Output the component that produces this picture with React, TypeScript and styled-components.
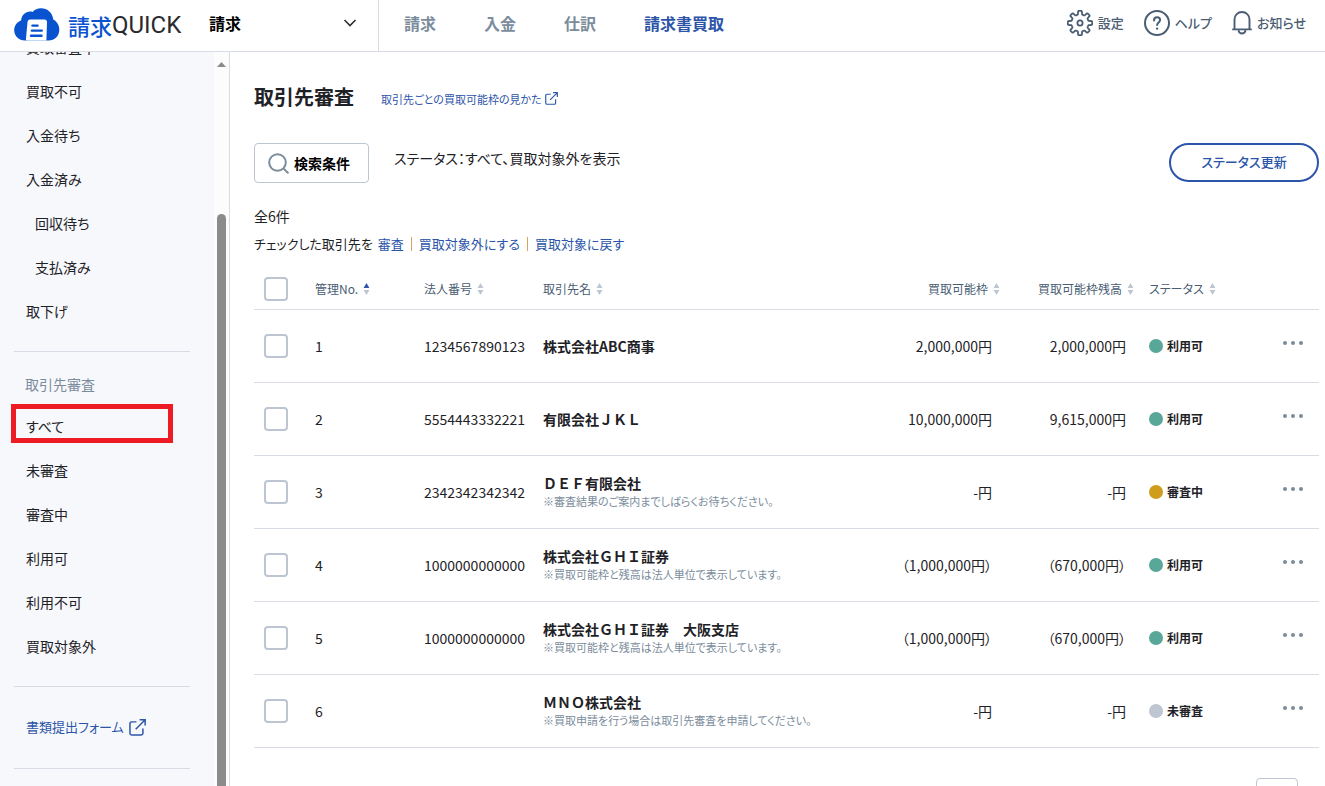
import React from "react";
import styled, { createGlobalStyle } from "styled-components";

const color = {
  text: "#1e2226",
  blue: "#2c55a9",
  slate: "#4a5d73",
  muted: "#7b8c9c",
  line: "#d8dce5",
  border: "#bcc5d1",
};

const GlobalStyle = createGlobalStyle`
  *, *::before, *::after { box-sizing: border-box; }
  body {
    margin: 0;
    background: #fff;
    color: ${color.text};
    font: 400 14px/20px "Noto Sans CJK JP", sans-serif;
    font-feature-settings: "palt";
  }
  button, input, select { font: inherit; font-feature-settings: inherit; color: inherit; margin: 0; }
  button { cursor: pointer; }
  a { color: ${color.blue}; text-decoration: none; }
  svg { display: block; flex: none; }
  ul { list-style: none; margin: 0; padding: 0; }
`;

const Page = styled.div`
  display: flex;
  flex-direction: column;
  height: 100vh;
  overflow: hidden;
`;

const Header = styled.header`
  display: flex;
  flex: none;
  height: 52px;
  border-bottom: 1px solid ${color.line};
`;

const Brand = styled.div`
  display: flex;
  align-items: center;
  width: 379px;
  padding: 0 21px 5px 14px;
  border-right: 1px solid ${color.line};
`;

const Logo = styled.a`
  display: flex;
  align-items: center;
  width: 195px;
  padding-top: 3px;
  line-height: 32px;
`;

const LogoKanji = styled.span`
  margin-left: 8px;
  font-size: 22px;
  font-weight: 500;
  color: #0a53d0;
`;

const LogoLatin = styled.span`
  font-family: "Liberation Sans Narrow", Roboto, sans-serif;
  font-size: 24px;
  color: #2a2a2e;
`;

const ProductSwitch = styled.button`
  display: flex;
  flex: 1;
  align-items: center;
  justify-content: space-between;
  padding: 0;
  border: 0;
  background: none;
  font-size: 16px;
  font-weight: 700;
  color: #000;
`;

const MainNav = styled.nav`
  display: flex;
  flex: 1;
  align-items: center;
  gap: 48px;
  padding: 0 0 6px 25px;
`;

const MainLink = styled.a<{ $active?: boolean }>`
  font-size: 16px;
  font-weight: 700;
  color: ${(p) => (p.$active ? color.blue : color.muted)};
`;

const Tools = styled.div`
  display: flex;
  align-items: center;
  gap: 20px;
  padding: 0 19px 6px 0;
`;

const Tool = styled.button`
  display: flex;
  align-items: center;
  gap: 5px;
  padding: 0;
  border: 0;
  background: none;
  font-size: 13px;
  font-weight: 500;
  color: ${color.slate};
`;

const Body = styled.div`
  display: flex;
  flex: 1;
  min-height: 0;
`;

const Sidebar = styled.aside`
  display: flex;
  flex: none;
  width: 230px;
  overflow: hidden;
  border-right: 1px solid ${color.line};
  background: #f7f8fc;
`;

const SideNav = styled.nav`
  flex: 1;
  margin-top: -27px;
  padding: 0 24px 0 14px;
`;

const SideItem = styled.li<{ $child?: boolean }>`
  position: relative;
  height: 44px;
  padding-left: ${(p) => (p.$child ? 21 : 12)}px;
  line-height: 44px;
  a { color: ${color.text}; }
`;

const Marker = styled.span`
  position: absolute;
  top: 0;
  left: -3px;
  width: 162px;
  height: 39px;
  border: 5px solid #ed1c24;
  pointer-events: none;
`;

const Rule = styled.hr`
  height: 1px;
  margin: 18px 0 17px;
  border: 0;
  background: ${color.line};
`;

const SideHeading = styled.h2`
  margin: 0;
  padding: 0 0 5px 11px;
  font-size: 14px;
  font-weight: 400;
  line-height: 30px;
  color: ${color.muted};
`;

const FormLink = styled.a`
  display: flex;
  align-items: center;
  gap: 5px;
  height: 46px;
  padding-left: 12px;
  font-size: 13px;
`;

const ScrollTrack = styled.div`
  display: flex;
  flex-direction: column;
  align-items: center;
  width: 15px;
  padding-top: 10px;
  background: #fcfcfc;
`;

const ScrollThumb = styled.div`
  flex: 1;
  width: 9px;
  margin-top: 147px;
  border-radius: 5px 5px 0 0;
  background: #8b8b8b;
`;

const Main = styled.main`
  flex: 1;
  min-width: 0;
  overflow: hidden;
  padding: 30px 6px 0 24px;
`;

const TitleRow = styled.div`
  display: flex;
  align-items: center;
  gap: 27px;
  height: 30px;
`;

const Title = styled.h1`
  margin: 0;
  font-size: 20px;
  font-weight: 700;
  line-height: 30px;
`;

const HelpLink = styled.a`
  display: flex;
  align-items: center;
  gap: 3px;
  padding-top: 3px;
  font-size: 11px;
`;

const Toolbar = styled.div`
  display: flex;
  align-items: flex-start;
  margin-top: 31px;
`;

const SearchButton = styled.button`
  display: flex;
  align-items: center;
  gap: 5px;
  width: 115px;
  height: 40px;
  padding: 0 0 0 13px;
  border: 1px solid ${color.border};
  border-radius: 4px;
  background: #fff;
  font-weight: 700;
  color: #000;
`;

const Criteria = styled.p`
  flex: 1;
  margin: 5px 0 0 25px;
`;

const UpdateButton = styled.button`
  width: 150px;
  height: 39px;
  padding: 0 0 2px;
  border: 2px solid ${color.blue};
  border-radius: 20px;
  background: #fff;
  font-size: 13px;
  font-weight: 500;
  color: ${color.blue};
`;

const Summary = styled.div`
  margin: 20px 0 12px;
  line-height: 27px;
`;

const BulkRow = styled.div`
  display: flex;
  align-items: center;
  font-size: 13px;
`;

const BulkActions = styled.ul`
  display: flex;
  margin-left: 5px;
  li { display: flex; align-items: center; }
  li + li::before {
    content: "";
    width: 1px;
    height: 14px;
    margin: 0 7px;
    background: #d9a35c;
  }
`;

const Table = styled.table`
  width: 100%;
  table-layout: fixed;
  border-collapse: collapse;
  tr { border-bottom: 1px solid ${color.line}; }
  th, td { padding: 0; text-align: left; vertical-align: middle; }
  th { height: 40px; }
  td { height: 73px; }
`;

const Col = styled.col<{ $w?: number }>`
  width: ${(p) => (p.$w ? `${p.$w}px` : "auto")};
`;

const CheckCell = styled.td`
  &&& { padding-left: 10px; }
`;

const Checkbox = styled.input`
  display: block;
  appearance: none;
  width: 24px;
  height: 24px;
  border: 2px solid ${color.border};
  border-radius: 4px;
  background: #fff;
`;

const SortButton = styled.button<{ $end?: boolean; $inset?: boolean }>`
  display: flex;
  align-items: center;
  justify-content: ${(p) => (p.$end ? "flex-end" : "flex-start")};
  gap: 5px;
  width: 100%;
  padding: 0 0 0 ${(p) => (p.$inset ? 15 : 0)}px;
  border: 0;
  background: none;
  font-size: 12px;
  font-weight: 400;
  color: ${color.slate};
  white-space: nowrap;
`;

const AmountCell = styled.td`
  &&& { padding-right: 8px; text-align: right; }
`;

const Name = styled.div`
  font-weight: 700;
  line-height: 18px;
  font-feature-settings: normal;
`;

const Note = styled.div`
  font-size: 11px;
  line-height: 18px;
  color: ${color.muted};
`;

const Status = styled.div`
  display: flex;
  align-items: center;
  gap: 4px;
  padding-left: 15px;
  font-size: 12px;
  font-weight: 700;
`;

const Dot = styled.span<{ $tone: Tone }>`
  width: 14px;
  height: 14px;
  border-radius: 50%;
  background: ${(p) => tones[p.$tone]};
`;

const MenuButton = styled.button`
  display: flex;
  gap: 4px;
  margin-left: auto;
  padding: 8px 16px 13px;
  border: 0;
  background: none;
  i { width: 4px; height: 4px; border-radius: 50%; background: ${color.muted}; }
`;

const Pager = styled.div`
  display: flex;
  justify-content: flex-end;
  margin-top: 30px;
  padding-right: 21px;
`;

const PageButton = styled.button`
  width: 42px;
  height: 40px;
  border: 1px solid ${color.border};
  border-radius: 4px;
  background: #fff;
`;

type Tone = "ok" | "pending" | "none";
const tones: Record<Tone, string> = { ok: "#58a799", pending: "#cf9d1c", none: "#bec6d2" };

const gearPath =
  Array.from({ length: 240 }, (_, i) => {
    const a = (i / 240) * Math.PI * 2;
    const r = 10.4 + 1.8 * Math.tanh(3.6 * Math.cos(8 * a));
    return `${i ? "L" : "M"}${(13 + r * Math.sin(a)).toFixed(2)} ${(13 - r * Math.cos(a)).toFixed(2)}`;
  }).join("") + "Z";

const GearIcon = () => (
  <svg width="26" height="26" viewBox="0 0 26 26" fill="none" stroke={color.slate} strokeWidth="1.8" strokeLinejoin="round">
    <path d={gearPath} />
    <circle cx="13" cy="13" r="2.6" />
  </svg>
);

const HelpIcon = () => (
  <svg width="26" height="26" viewBox="0 0 26 26" fill="none" stroke={color.slate} strokeWidth="2" strokeLinecap="round">
    <circle cx="13" cy="13" r="12" />
    <path d="M10 10.4c0-1.9 1.3-3.1 3.1-3.1s3 1.1 3 2.8c0 2.4-3 2.4-3 5" />
    <circle cx="13.1" cy="18.6" r="0.5" fill={color.slate} strokeWidth="1.4" />
  </svg>
);

const BellIcon = () => (
  <svg width="20" height="26" viewBox="0 0 20 26" fill="none" stroke={color.slate} strokeWidth="1.9" strokeLinejoin="round" strokeLinecap="round">
    <path d="M2.5 19V9.5a7.5 7.5 0 0 1 15 0V19M1 19.4h18" />
    <path d="M6.600 20.800a3.500 3.500 0 0 0 6.800 0" />
  </svg>
);

const ExternalIcon = ({ size }: { size: number }) => (
  <svg width={size} height={size} viewBox="0 0 16 16" fill="none" stroke={color.blue} strokeWidth="1.4">
    <path d="M7 2.7H2.5a1.6 1.6 0 0 0-1.6 1.6v9.2a1.6 1.6 0 0 0 1.6 1.6h9a1.6 1.6 0 0 0 1.6-1.6V9" />
    <path d="M10 .8h5.2V6M15 1 6.3 9.7" />
  </svg>
);

const SearchIcon = () => (
  <svg width="21" height="21" viewBox="0 0 21 21" fill="none" stroke={color.muted} strokeWidth="2" strokeLinecap="round">
    <circle cx="9.5" cy="9.5" r="8.3" />
    <path d="m15.6 15.6 4.2 4.2" />
  </svg>
);

const SortIcon = ({ asc }: { asc?: boolean }) => (
  <svg width="7" height="12" viewBox="0 0 7 12">
    <path d="M3.5 0 6.4 5H.6Z" fill={asc ? color.blue : color.border} />
    <path d="M3.5 12 6.4 7H.6Z" fill={color.border} />
  </svg>
);

const CloudLogo = () => (
  <svg width="46" height="33" viewBox="0 0 46 33">
    <path
      fill="#0a53d0"
      d="M11 32.5C4.800 32.500.2 28 .2 22.300c0-5 3-8.600 6.900-9.900C7.600 7.500 11.300 3.600 16.400 3.600c.8 0 1.500.1 2.200.3C20.600 1.500 23.600.2 27 .2c6.500 0 11.700 4.800 12.300 11.300 3.700 2 6 5.800 6 10.200 0 6.200-4.600 10.800-10.800 10.800Z"
    />
    <path fill="#fff" d="M16 11.500h14.500c1.600 0 2.500.9 2.500 2.500l-.6 18.500H13.200c-1.200 0-1.400-.8-1.200-2L13.500 14c.2-1.600 1-2.500 2.500-2.500Z" />
    <path d="M18.400 17.600h5.200M17.800 22.600h10M17 27.700h10.500" stroke="#0a53d0" strokeWidth="2.400" strokeLinecap="round" />
  </svg>
);

const applicationLinks = [
  { label: "買取審査中" },
  { label: "買取不可" },
  { label: "入金待ち" },
  { label: "入金済み" },
  { label: "回収待ち", child: true },
  { label: "支払済み", child: true },
  { label: "取下げ" },
];

const reviewLinks = ["すべて", "未審査", "審査中", "利用可", "利用不可", "買取対象外"];

interface Client {
  no: number;
  corp: string;
  name: string;
  note?: string;
  limit: string;
  rest: string;
  tone: Tone;
  status: string;
}

const sharedNote = "※買取可能枠と残高は法人単位で表示しています。";

const clients: Client[] = [
  { no: 1, corp: "1234567890123", name: "株式会社ABC商事", limit: "2,000,000円", rest: "2,000,000円", tone: "ok", status: "利用可" },
  { no: 2, corp: "5554443332221", name: "有限会社ＪＫＬ", limit: "10,000,000円", rest: "9,615,000円", tone: "ok", status: "利用可" },
  { no: 3, corp: "2342342342342", name: "ＤＥＦ有限会社", note: "※審査結果のご案内までしばらくお待ちください。", limit: "-円", rest: "-円", tone: "pending", status: "審査中" },
  { no: 4, corp: "1000000000000", name: "株式会社ＧＨＩ証券", note: sharedNote, limit: "（1,000,000円）", rest: "（670,000円）", tone: "ok", status: "利用可" },
  { no: 5, corp: "1000000000000", name: "株式会社ＧＨＩ証券　大阪支店", note: sharedNote, limit: "（1,000,000円）", rest: "（670,000円）", tone: "ok", status: "利用可" },
  { no: 6, corp: "", name: "ＭＮＯ株式会社", note: "※買取申請を行う場合は取引先審査を申請してください。", limit: "-円", rest: "-円", tone: "none", status: "未審査" },
];

export default function App() {
  return (
    <Page>
      <GlobalStyle />
      <Header>
        <Brand>
          <Logo href="#">
            <CloudLogo />
            <LogoKanji>請求</LogoKanji>
            <LogoLatin>QUICK</LogoLatin>
          </Logo>
          <ProductSwitch type="button">
            請求
            <svg width="14" height="8" viewBox="0 0 14 8" fill="none" stroke="#2a2f36" strokeWidth="1.600">
              <path d="m1.500 1 5.500 5.500L12.500 1" />
            </svg>
          </ProductSwitch>
        </Brand>
        <MainNav>
          <MainLink href="#">請求</MainLink>
          <MainLink href="#">入金</MainLink>
          <MainLink href="#">仕訳</MainLink>
          <MainLink href="#" $active>請求書買取</MainLink>
        </MainNav>
        <Tools>
          <Tool type="button"><GearIcon />設定</Tool>
          <Tool type="button"><HelpIcon />ヘルプ</Tool>
          <Tool type="button"><BellIcon />お知らせ</Tool>
        </Tools>
      </Header>
      <Body>
        <Sidebar>
          <SideNav>
            <ul>
              {applicationLinks.map((l) => (
                <SideItem key={l.label} $child={l.child}><a href="#">{l.label}</a></SideItem>
              ))}
            </ul>
            <Rule />
            <SideHeading>取引先審査</SideHeading>
            <ul>
              {reviewLinks.map((label, i) => (
                <SideItem key={label}>
                  <a href="#">{label}</a>
                  {i === 0 && <Marker />}
                </SideItem>
              ))}
            </ul>
            <Rule />
            <FormLink href="#">書類提出フォーム<ExternalIcon size={17} /></FormLink>
            <Rule />
          </SideNav>
          <ScrollTrack>
            <svg width="9" height="5" viewBox="0 0 9 5"><path d="M0 5 4.500 0 9 5Z" fill="#8b8b8b" /></svg>
            <ScrollThumb />
          </ScrollTrack>
        </Sidebar>
        <Main>
          <TitleRow>
            <Title>取引先審査</Title>
            <HelpLink href="#">取引先ごとの買取可能枠の見かた<ExternalIcon size={13} /></HelpLink>
          </TitleRow>
          <Toolbar>
            <SearchButton type="button"><SearchIcon />検索条件</SearchButton>
            <Criteria>ステータス：すべて、買取対象外を表示</Criteria>
            <UpdateButton type="button">ステータス更新</UpdateButton>
          </Toolbar>
          <Summary>
            <div>全6件</div>
            <BulkRow>
              チェックした取引先を
              <BulkActions>
                <li><a href="#">審査</a></li>
                <li><a href="#">買取対象外にする</a></li>
                <li><a href="#">買取対象に戻す</a></li>
              </BulkActions>
            </BulkRow>
          </Summary>
          <Table>
            <colgroup>
              <Col $w={61} />
              <Col $w={109} />
              <Col $w={119} />
              <Col />
              <Col $w={130} />
              <Col $w={134} />
              <Col $w={119} />
              <Col $w={66} />
            </colgroup>
            <thead>
              <tr>
                <CheckCell as="th"><Checkbox type="checkbox" aria-label="すべて選択" /></CheckCell>
                <th><SortButton type="button">管理No.<SortIcon asc /></SortButton></th>
                <th><SortButton type="button">法人番号<SortIcon /></SortButton></th>
                <th><SortButton type="button">取引先名<SortIcon /></SortButton></th>
                <th><SortButton type="button" $end>買取可能枠<SortIcon /></SortButton></th>
                <th><SortButton type="button" $end>買取可能枠残高<SortIcon /></SortButton></th>
                <th><SortButton type="button" $inset>ステータス<SortIcon /></SortButton></th>
                <th aria-label="操作" />
              </tr>
            </thead>
            <tbody>
              {clients.map((c) => (
                <tr key={c.no}>
                  <CheckCell><Checkbox type="checkbox" aria-label={c.name} /></CheckCell>
                  <td>{c.no}</td>
                  <td>{c.corp}</td>
                  <td>
                    <Name>{c.name}</Name>
                    {c.note && <Note>{c.note}</Note>}
                  </td>
                  <AmountCell>{c.limit}</AmountCell>
                  <AmountCell>{c.rest}</AmountCell>
                  <td><Status><Dot $tone={c.tone} />{c.status}</Status></td>
                  <td><MenuButton type="button" aria-label="メニュー"><i /><i /><i /></MenuButton></td>
                </tr>
              ))}
            </tbody>
          </Table>
          <Pager><PageButton type="button" aria-label="次のページ" /></Pager>
        </Main>
      </Body>
    </Page>
  );
}
